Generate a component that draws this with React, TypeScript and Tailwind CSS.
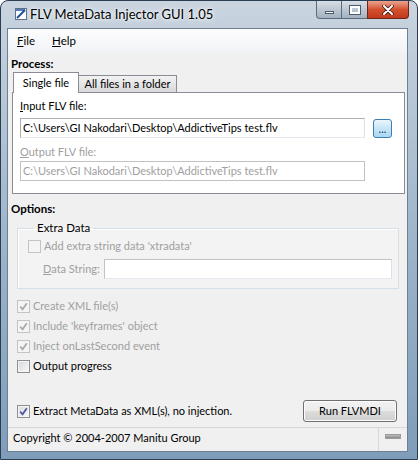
import type { ReactNode } from 'react';
import clsx from 'clsx';

function Check({ checked, disabled }: { checked?: boolean; disabled?: boolean }) {
  return (
    <span
      className={clsx(
        'w-[13px] h-[13px] border flex items-center justify-center shrink-0',
        disabled
          ? 'border-[#c4c4c4] bg-[#f4f4f4]'
          : 'border-[#8e8f8f] bg-gradient-to-br from-[#d6d8dc] to-[#fafafa] shadow-[inset_0_0_0_1px_#f4f4f4]'
      )}
    >
      {checked && (
        <svg width="9" height="9" viewBox="0 0 9 9">
          <path
            d="M1.2 4.6 L3.6 7.3 L7.8 1.2"
            fill="none"
            stroke={disabled ? '#a9a9a9' : '#4b55a0'}
            strokeWidth="1.7"
          />
        </svg>
      )}
    </span>
  );
}

function CheckRow({ label, checked, disabled }: { label: string; checked?: boolean; disabled?: boolean }) {
  return (
    <div className="h-[20px] flex items-center gap-[3px] pl-[9px] whitespace-nowrap">
      <Check checked={checked} disabled={disabled} />
      <span className={disabled ? 'text-[#a0a0a0]' : 'text-black'}>{label}</span>
    </div>
  );
}

function TextBox({ value, disabled, className }: { value?: string; disabled?: boolean; className?: string }) {
  return (
    <div
      className={clsx(
        'h-[20px] border bg-white flex items-center px-[2px] whitespace-nowrap overflow-hidden',
        disabled ? 'border-[#c2c2c2] text-[#a0a0a0]' : 'border-[#abadb3] border-b-[#e3e9ef] border-r-[#dbdfe6] text-black',
        className
      )}
    >
      {value}
    </div>
  );
}

function CaptionButtons() {
  return (
    <div className="flex h-[18px] mr-[8px]">
      <div className="w-[26px] h-full rounded-bl-[4px] border border-t-0 border-[#5b6b7c] bg-gradient-to-b from-[#d7dee6] to-[#a3b1c0] flex items-center justify-center">
        <span className="w-[9px] h-[3px] bg-white border border-[#4d5a67] mt-[5px]" />
      </div>
      <div className="w-[25px] h-full border-b border-[#5b6b7c] bg-gradient-to-b from-[#d7dee6] to-[#a3b1c0] flex items-center justify-center">
        <span className="w-[10px] h-[8px] border-2 border-white outline outline-1 outline-[#4d5a67]" />
      </div>
      <div className="w-[42px] h-full rounded-br-[4px] border border-t-0 border-[#6b2418] bg-gradient-to-b from-[#e9a38f] via-[#d3502f] to-[#c1391c] flex items-center justify-center">
        <svg width="12" height="10" viewBox="0 0 12 10">
          <path d="M2 1 L10 9 M10 1 L2 9" stroke="#3b1a12" strokeWidth="3.6" strokeLinecap="round" />
          <path d="M2 1 L10 9 M10 1 L2 9" stroke="#ffffff" strokeWidth="2" strokeLinecap="round" />
        </svg>
      </div>
    </div>
  );
}

function Section({ children, className }: { children: ReactNode; className?: string }) {
  return <div className={clsx('h-[16px] leading-[16px] pl-[3px] font-bold text-[11.5px]', className)}>{children}</div>;
}

export default function App() {
  return (
    <div className="w-[418px] h-[460px] overflow-hidden font-['Lato',sans-serif] text-[11px] text-black">
      <div className="w-full h-full rounded-t-[8px] border border-[#2b3d52] bg-gradient-to-b from-[#c9d4df] via-[#9fb6cb] to-[#7f9db9] flex flex-col pl-[6px] pr-[9px] pb-[7px]">
        {/* title bar */}
        <div className="h-[27px] -ml-[6px] -mr-[9px] flex items-start shrink-0">
          <div className="ml-[14px] mt-[7px] w-[12px] h-[12px] bg-white border border-[#5c6f88] flex items-center justify-center">
            <svg width="10" height="10" viewBox="0 0 10 10">
              <path d="M1 9 L9 1" stroke="#1c4f9c" strokeWidth="2" />
              <path d="M0 1 H9" stroke="#1c4f9c" strokeWidth="1.5" />
            </svg>
          </div>
          <div className="ml-[3px] mt-[5px] leading-[17px] text-[13px] text-black whitespace-nowrap [text-shadow:0_0_6px_#ffffff,0_0_3px_#ffffff]">
            FLV MetaData Injector GUI 1.05
          </div>
          <div className="ml-auto">
            <CaptionButtons />
          </div>
        </div>

        {/* client area */}
        <div className="flex-1 bg-[#f0f0f0] border border-[#6d7f93] flex flex-col whitespace-nowrap">
          {/* menu */}
          <div className="h-[24px] shrink-0 bg-gradient-to-b from-[#fdfdfe] to-[#f1f3f6] flex items-center gap-[17px] pl-[9px] text-[11.5px]">
            <span>
              <span className="underline">F</span>ile
            </span>
            <span>
              <span className="underline">H</span>elp
            </span>
          </div>

          <Section className="mt-[3px]">Process:</Section>

          {/* tabs */}
          <div className="h-[20px] ml-[5px] flex items-end">
            <div className="h-[21px] w-[66px] bg-white border border-b-0 border-[#898c95] flex items-center justify-center relative z-10 -mb-px">
              Single file
            </div>
            <div className="h-[17px] w-[98px] border border-l-0 border-b-0 border-[#898c95] bg-gradient-to-b from-[#f2f2f2] to-[#d9d9d9] flex items-center justify-center">
              All files in a folder
            </div>
          </div>
          <div className="ml-[4px] w-[393px] h-[102px] bg-white border border-[#898c95] pl-[7px] flex flex-col">
            <div className="h-[16px] leading-[16px] mt-[5px]">
              <span className="underline">I</span>nput FLV file:
            </div>
            <div className="flex items-center mt-[4px]">
              <TextBox className="w-[345px]" value="C:\Users\GI Nakodari\Desktop\AddictiveTips test.flv" />
              <div className="ml-[8px] w-[19px] h-[19px] rounded-[3px] border border-[#3c7fb1] bg-gradient-to-b from-[#eaf6fd] via-[#c8e5f7] to-[#a7d9f5] flex items-end justify-center leading-[12px] pb-[2px] text-[#1f2a44]">
                ...
              </div>
            </div>
            <div className="h-[16px] leading-[16px] mt-[6px] text-[#a0a0a0]">
              <span className="underline">O</span>utput FLV file:
            </div>
            <TextBox disabled className="w-[345px] mt-[1px]" value="C:\Users\GI Nakodari\Desktop\AddictiveTips test.flv" />
          </div>

          <Section className="mt-[7px]">Options:</Section>

          <fieldset className="ml-[9px] w-[382px] mt-[4px] border border-[#d5dfe5] shadow-[inset_1px_1px_0_#ffffff] bg-[#f3f3f3] pl-[10px] pr-[6px] pb-[9px]">
            <legend className="ml-[6px] px-[3px] leading-[14px] text-[11.5px]">Extra Data</legend>
            <div className="h-[16px] flex items-center gap-[3px] mt-[3px]">
              <Check disabled />
              <span className="text-[#a0a0a0]">Add extra string data 'xtradata'</span>
            </div>
            <div className="flex items-center mt-[5px] pl-[15px]">
              <span className="text-[#a0a0a0] w-[61px]">
                <span className="underline">D</span>ata String:
              </span>
              <TextBox className="flex-1 border-[#c2c2c2]" />
            </div>
          </fieldset>

          <div className="mt-[7px] flex flex-col">
            <CheckRow label="Create XML file(s)" checked disabled />
            <CheckRow label="Include 'keyframes' object" checked disabled />
            <CheckRow label="Inject onLastSecond event" checked disabled />
            <CheckRow label="Output progress" />
          </div>

          <div className="mt-[24px] h-[22px] flex items-center">
            <div className="flex items-center gap-[3px] pl-[9px]">
              <Check checked />
              <span>Extract MetaData as XML(s), no injection.</span>
            </div>
            <div className="ml-auto mr-[10px] w-[94px] h-[22px] rounded-[3px] border border-[#707070] bg-[linear-gradient(to_bottom,#f2f2f2_0%,#ebebeb_50%,#dddddd_50%,#cfcfcf_100%)] shadow-[inset_0_0_0_1px_#fcfcfc] flex items-center justify-center">
              Run FLVMDI
            </div>
          </div>

          {/* status bar */}
          <div className="mt-auto h-[24px] border-t border-[#d7d7d7] bg-[#f0f0f0] flex">
            <div className="w-[371px] border-r border-[#d7d7d7] pl-[5px] pt-[2px] leading-[16px]">
              Copyright © 2004-2007 Manitu Group
            </div>
            <div className="flex-1 flex items-start justify-center pt-[6px]">
              <span className="w-[16px] h-[5px] bg-gradient-to-b from-[#bdbdbd] to-[#8a8a8a] border border-[#9c9c9c]" />
            </div>
          </div>
        </div>
      </div>
    </div>
  );
}
